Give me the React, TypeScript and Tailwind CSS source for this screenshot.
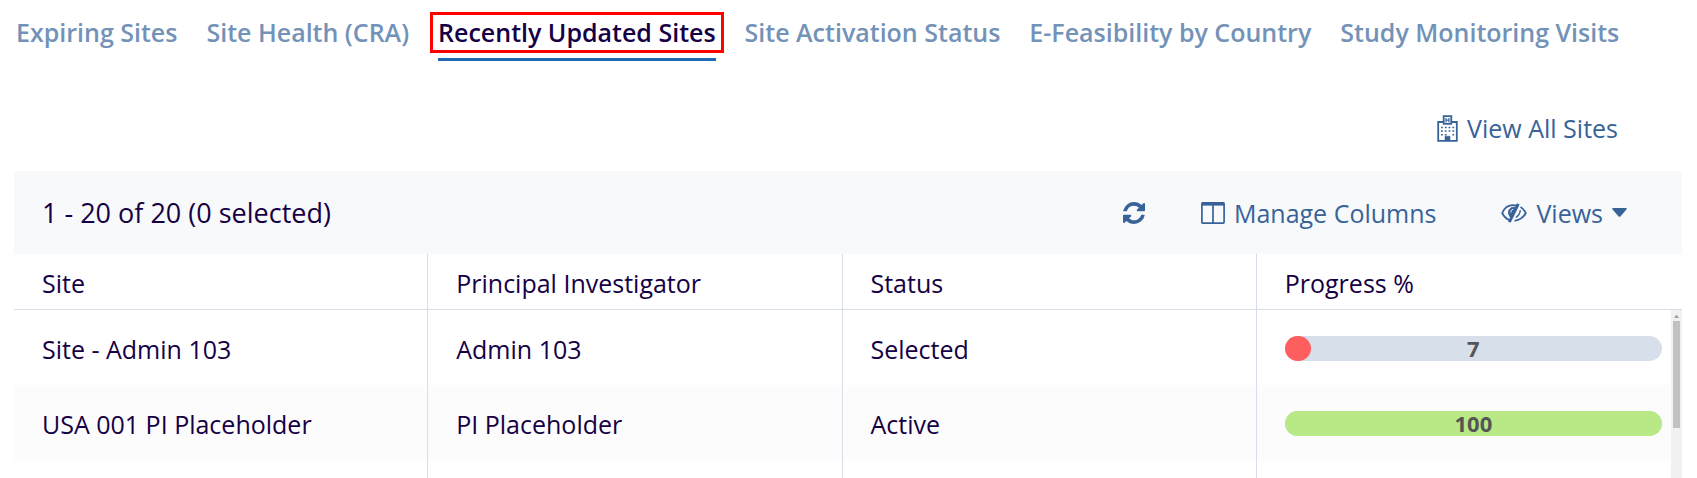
import { useState } from 'react';
import { clsx } from 'clsx';

const TABS = [
  'Expiring Sites',
  'Site Health (CRA)',
  'Recently Updated Sites',
  'Site Activation Status',
  'E-Feasibility by Country',
  'Study Monitoring Visits',
];

interface SiteRow {
  site: string;
  investigator: string;
  status: string;
  progress: number;
}

const ROWS: SiteRow[] = [
  { site: 'Site - Admin 103', investigator: 'Admin 103', status: 'Selected', progress: 7 },
  { site: 'USA 001 PI Placeholder', investigator: 'PI Placeholder', status: 'Active', progress: 100 },
];

export default function App() {
  const [active, setActive] = useState('Recently Updated Sites');

  return (
    <div className="flex h-screen flex-col overflow-hidden bg-white pr-[15px] pl-3.5 font-['Open_Sans',sans-serif] text-[25px] leading-8 text-[#150045]">
      {/* ── Tabs ── */}
      <nav className="flex h-[61px] shrink-0 gap-[29px] pl-0.5 whitespace-nowrap">
        {TABS.map((tab) => (
          <a
            key={tab}
            href="#"
            onClick={(e) => {
              e.preventDefault();
              setActive(tab);
            }}
            className={clsx(
              'relative border-b-[3px] pt-4 font-semibold',
              tab === active ? 'border-[#206bb0]' : 'border-transparent text-[#7392b8]'
            )}
          >
            {tab}
            {tab === active && (
              <span className="absolute -inset-x-2 top-3 h-[41px] border-[3px] border-[#ff0000]" />
            )}
          </a>
        ))}
      </nav>

      <div className="flex h-[110px] shrink-0 items-center justify-end pt-6 pr-16">
        <a href="#" className="flex items-center gap-[9px] text-[#386399]">
          <HospitalIcon />
          View All Sites
        </a>
      </div>

      {/* ── Toolbar ── */}
      <div className="flex h-[83px] shrink-0 items-center bg-[#f8f9fb] pr-[55px] pl-7 text-[#386399]">
        <span className="flex-1 text-[27px] text-[#150045]">1 - 20 of 20 (0 selected)</span>
        <button type="button" aria-label="Refresh" className="mr-14">
          <RefreshIcon />
        </button>
        <button type="button" className="mr-[65px] flex items-center gap-[9px]">
          <ColumnsIcon />
          Manage Columns
        </button>
        <button type="button" className="flex items-center gap-[9px]">
          <ViewsIcon />
          Views
          <svg viewBox="0 0 15 9" className="h-[9px] w-[15px]" fill="currentColor">
            <path d="M1 0h13q1 .4.6 1.2L8.4 8.4q-.9.9-1.8 0L.4 1.2Q0 .4 1 0z" />
          </svg>
        </button>
      </div>

      {/* ── Grid ── */}
      <div className="flex min-h-0 flex-1 overflow-hidden">
        <div className="flex-1">
          <table className="h-full w-full table-fixed border-separate border-spacing-0">
            <thead>
              <tr className="h-14 text-left">
                <HeadCell>Site</HeadCell>
                <HeadCell>Principal Investigator</HeadCell>
                <HeadCell>Status</HeadCell>
                <HeadCell>Progress %</HeadCell>
              </tr>
            </thead>
            <tbody>
              {ROWS.map((row) => (
                <tr key={row.site} className="h-[75px] even:bg-[#fcfcfc]">
                  <Cell>{row.site}</Cell>
                  <Cell>{row.investigator}</Cell>
                  <Cell>{row.status}</Cell>
                  <td className="pt-0.5 pr-[9px] pl-7">
                    <ProgressBar value={row.progress} />
                  </td>
                </tr>
              ))}
              <tr>
                <Cell />
                <Cell />
                <Cell />
                <td />
              </tr>
            </tbody>
          </table>
        </div>

        {/* scrollbar track */}
        <div className="flex w-[11px] flex-col">
          <div className="h-14 shrink-0 border-b border-[#d6dee9]" />
          <div className="flex flex-1 flex-col items-center bg-[#f1f1f1] pt-[5px]">
            <svg viewBox="0 0 5 3" className="h-[3px] w-[5px]" fill="#a3a3a3">
              <path d="M2 0h1l2 3H0z" />
            </svg>
            <div className="mt-[3px] h-[107px] w-[7px] bg-[#c1c1c1]" />
          </div>
        </div>
      </div>
    </div>
  );
}

function HeadCell({ children }: { children: string }) {
  return (
    <th className="border-r border-b border-[#d6dee9] pt-0.5 pl-7 font-normal last:border-r-0">
      {children}
    </th>
  );
}

function Cell({ children }: { children?: string }) {
  return <td className="border-r border-[#d6dee9] pt-0.5 pl-7">{children}</td>;
}

function ProgressBar({ value }: { value: number }) {
  return (
    <div
      role="progressbar"
      aria-valuenow={value}
      className="relative h-[25px] rounded-full bg-[#d7dfea]"
    >
      <div
        className={clsx('h-full rounded-full', value < 50 ? 'bg-[#ff5e5e]' : 'bg-[#b8e986]')}
        style={{ width: `${value}%` }}
      />
      <span className="absolute inset-x-0 top-0 text-center text-[22px] leading-6 font-bold text-[#555555]">
        {value}
      </span>
    </div>
  );
}

/* ── Icons ── */

function HospitalIcon() {
  return (
    <svg viewBox="0 0 21 27" className="h-[27px] w-[21px]" fill="none" stroke="currentColor">
      <path d="M6.5 7H1.2v18.8h18.6V7h-5.3" strokeWidth="1.8" />
      <path d="M6.7 1.2h7.6v7.6H6.7z" strokeWidth="1.8" />
      <path d="M9 3v4.4M12 3v4.4M9 5.2h3" strokeWidth="1.2" />
      <path d="M4 12.5h13.5M4 16h13.5" strokeWidth="1.6" strokeDasharray="1.8 2" />
      <path d="M4 19.7h5.6M15.4 19.7h2.1" strokeWidth="1.6" strokeDasharray="1.8 2" />
      <path d="M8 21.3h5v4.5H8z" fill="currentColor" strokeWidth="0.6" />
    </svg>
  );
}

function RefreshIcon() {
  return (
    <svg viewBox="0 128 1536 1536" className="size-[22px]" fill="currentColor">
      <path d="M1511 1056q0 5-1 7-64 268-268 434.5T764 1664q-146 0-282.5-55T238 1452l-129 129q-19 19-45 19t-45-19-19-45v-448q0-26 19-45t45-19h448q26 0 45 19t19 45-19 45l-137 137q71 66 161 102t187 36q134 0 250-65t186-179q11-17 53-117 8-23 30-23h192q13 0 22.5 9.5t9.5 22.5zm25-800v448q0 26-19 45t-45 19h-448q-26 0-45-19t-19-45 19-45l138-138Q969 384 768 384q-134 0-250 65T332 628q-11 17-53 117-8 23-30 23H50q-13 0-22.5-9.5T18 736v-7q65-268 270-434.5T768 128q146 0 284 55.5T1297 340l130-129q19-19 45-19t45 19 19 45z" />
    </svg>
  );
}

function ColumnsIcon() {
  return (
    <svg viewBox="0 0 24 22" className="h-[22px] w-6" fill="none" stroke="currentColor">
      <rect x="0.9" y="0.8" width="22.2" height="20.3" rx="1" strokeWidth="1.7" />
      <path d="M1 2h22" strokeWidth="3.2" />
      <path d="M12 3v18" strokeWidth="1.7" />
    </svg>
  );
}

function ViewsIcon() {
  return (
    <svg viewBox="0 0 26 20" className="h-5 w-[26px]" fill="none" stroke="currentColor">
      <path d="M16.5 2.8Q5.5 0 1.2 10 3.5 15 8.3 17" strokeWidth="1.8" />
      <path d="M19.5 4Q23 6 24.8 10 21.5 16.8 13.5 17.8" strokeWidth="1.8" />
      <path d="M17.3.8 8.3 19.2" strokeWidth="3" />
      <path d="M15.5 4.5C10 3 6.5 7 7.8 11.2l1.7 3.3z" fill="currentColor" strokeWidth="1" />
      <path d="M9.8 9.5Q9.8 7 12 6.2" stroke="#f8f9fb" strokeWidth="1" />
      <path d="M19.3 7.2Q19 11.5 14.8 14.5" strokeWidth="1.5" />
    </svg>
  );
}
